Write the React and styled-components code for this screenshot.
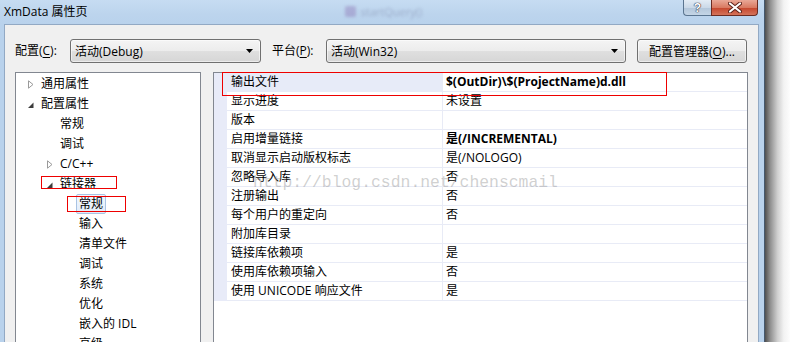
import React from "react";
import styled, { createGlobalStyle } from "styled-components";

const UI_FONT = `"Open Sans", "Noto Sans CJK SC", sans-serif`;

const GlobalStyle = createGlobalStyle`
  html, body { margin: 0; padding: 0; background: #ffffff; }
  body { font-family: ${UI_FONT}; font-size: 12px; color: #000; }
`;

const Page = styled.div`
  display: flex;
  width: 790px;
  height: 342px;
  overflow: hidden;
  background: #fff;
`;

const Window = styled.div`
  width: 765px;
  flex-shrink: 0;
  display: flex;
  flex-direction: column;
  box-sizing: border-box;
  background: #b9d2ec;
  border-right: 1px solid #44586e;
`;

const TitleBar = styled.div`
  height: 24px;
  flex-shrink: 0;
  display: flex;
  align-items: flex-start;
  padding-left: 4px;
  background: linear-gradient(180deg, #c6dcf2 0%, #bcd4ed 60%, #b9d2ec 100%);
`;

const Title = styled.span`
  line-height: 24px;
  font-size: 12px;
  color: #000;
`;

const GlassIcon = styled.span`
  margin-left: 258px;
  margin-top: 6px;
  width: 11px;
  height: 11px;
  border-radius: 2px;
  background: rgba(120, 80, 160, 0.3);
  filter: blur(1.5px);
`;

const GlassText = styled.span`
  margin-left: 4px;
  margin-top: 5px;
  line-height: 14px;
  font-size: 11px;
  color: rgba(70, 70, 110, 0.28);
  filter: blur(1.4px);
`;

const Caption = styled.div`
  margin-left: auto;
  margin-right: 6px;
  display: flex;
`;

const HelpButton = styled.div`
  width: 28px;
  height: 16px;
  box-sizing: border-box;
  border: 1px solid #5b7590;
  border-top: none;
  border-right: none;
  border-bottom-left-radius: 4px;
  background: linear-gradient(180deg, #e3ecf5 0%, #cbd9e8 50%, #b3c6da 51%, #c4d5e6 100%);
  display: flex;
  align-items: center;
  justify-content: center;
  font-family: "Liberation Sans", sans-serif;
  font-weight: bold;
  font-size: 12px;
  color: #fff;
  text-shadow: 0 0 1px #334, 0 0 1px #334, 0 0 1px #334;
`;

const CloseButton = styled.div`
  width: 47px;
  height: 16px;
  box-sizing: border-box;
  border: 1px solid #6b2c22;
  border-top: none;
  border-bottom-right-radius: 4px;
  background: linear-gradient(180deg, #e9a897 0%, #d97a62 50%, #c5452c 51%, #d4735a 100%);
  display: flex;
  align-items: center;
  justify-content: center;
`;

const Frame = styled.div`
  flex: 1;
  display: flex;
  padding: 0 5px 0 4px;
  min-height: 0;
`;

const Client = styled.div`
  flex: 1;
  display: flex;
  flex-direction: column;
  background: #f0f0f0;
  border: 1px solid #92a9c4;
  border-bottom: none;
  padding: 14px 10px 0 10px;
`;

const TopRow = styled.div`
  display: flex;
  align-items: center;
  height: 24px;
  margin-bottom: 9px;
  flex-shrink: 0;
`;

const Label = styled.span`
  width: ${(p) => p.$w}px;
  margin-left: ${(p) => p.$ml || 0}px;
  line-height: 24px;
  white-space: nowrap;
  u { text-decoration: underline; text-underline-offset: 2px; }
`;

const Combo = styled.div`
  width: ${(p) => p.$w}px;
  height: 24px;
  box-sizing: border-box;
  display: flex;
  align-items: center;
  padding: 0 7px 0 4px;
  border: 1px solid #707070;
  border-radius: 3px;
  background: linear-gradient(180deg, #f4f4f4 0%, #ececec 50%, #dfdfdf 51%, #d6d6d6 100%);
  box-shadow: inset 0 0 0 1px rgba(255, 255, 255, 0.55);
`;

const ComboText = styled.span`
  flex: 1;
  white-space: nowrap;
`;

const Button = styled.div`
  width: 110px;
  height: 24px;
  margin-left: 11px;
  box-sizing: border-box;
  display: flex;
  align-items: center;
  justify-content: center;
  border: 1px solid #707070;
  border-radius: 3px;
  background: linear-gradient(180deg, #f4f4f4 0%, #ececec 50%, #dfdfdf 51%, #d6d6d6 100%);
  box-shadow: inset 0 0 0 1px rgba(255, 255, 255, 0.55);
  white-space: nowrap;
  u { text-decoration: underline; text-underline-offset: 2px; }
`;

const Panels = styled.div`
  display: flex;
  gap: 12px;
  height: 290px;
  flex-shrink: 0;
`;

const Tree = styled.div`
  width: 186px;
  box-sizing: border-box;
  border: 1px solid #828790;
  background: #fff;
  padding-top: 1px;
`;

const TreeRow = styled.div`
  position: relative;
  height: 20px;
  display: flex;
  align-items: center;
  padding-left: ${(p) => 12 + 19 * p.$level}px;
`;

const Expander = styled.span`
  width: 13px;
  height: 20px;
  display: flex;
  align-items: center;
  flex-shrink: 0;
`;

const ItemText = styled.span`
  margin-left: -3px;
  padding: 0 2px;
  line-height: 18px;
  border: 1px solid ${(p) => (p.$selected ? "#a9c3e3" : "transparent")};
  border-radius: 2px;
  background: ${(p) => (p.$selected ? "linear-gradient(180deg, #f3f8fd, #e1ecf9)" : "transparent")};
  white-space: nowrap;
`;

const RedMark = styled.div`
  position: absolute;
  left: ${(p) => p.$x}px;
  top: ${(p) => p.$y}px;
  width: ${(p) => p.$w}px;
  height: ${(p) => p.$h}px;
  box-sizing: border-box;
  border: 1px solid #ee0000;
  pointer-events: none;
  z-index: 2;
`;

const Grid = styled.div`
  position: relative;
  width: 535px;
  box-sizing: border-box;
  border: 1px solid #828790;
  background: #fff;
`;

const GridRow = styled.div`
  position: relative;
  display: flex;
  height: 19px;
`;

const Gutter = styled.div`
  width: 13px;
  flex-shrink: 0;
  background: #e8ebf8;
`;

const NameCell = styled.div`
  width: 215px;
  flex-shrink: 0;
  box-sizing: border-box;
  padding-left: 4px;
  line-height: 18px;
  border-bottom: 1px solid #e8ebf6;
  background: ${(p) => (p.$selected ? "#e7ebf8" : "#fff")};
  white-space: nowrap;
`;

const ValueCell = styled.div`
  flex: 1;
  box-sizing: border-box;
  padding-left: 3px;
  line-height: 18px;
  border-left: 1px solid #e8ebf6;
  border-bottom: 1px solid #e8ebf6;
  font-weight: ${(p) => (p.$bold ? 700 : 400)};
  white-space: nowrap;
`;

const Watermark = styled.div`
  position: absolute;
  left: 39px;
  top: 100px;
  font-family: "Liberation Mono", monospace;
  font-size: 16.4px;
  line-height: 20px;
  color: rgba(150, 150, 150, 0.45);
  white-space: nowrap;
  pointer-events: none;
  z-index: 1;
`;

const Shadow = styled.div`
  flex: 1;
  background: linear-gradient(90deg, #505050 0%, #8d8d8d 20%, #cfcfcf 50%, #f2f2f2 75%, #fdfdfd 100%);
`;

const ComboArrow = () => (
  <svg width="7" height="4" viewBox="0 0 7 4">
    <path d="M0 0h7L3.5 4z" fill="#000" />
  </svg>
);

const Collapsed = () => (
  <svg width="6" height="9" viewBox="0 0 6 9">
    <path d="M0.5 0.8L5 4.5 0.5 8.2z" fill="#fff" stroke="#9a9a9a" strokeWidth="1" />
  </svg>
);

const Expanded = () => (
  <svg width="6" height="10" viewBox="0 0 6 10">
    <path d="M5.5 3.5v5.5H0z" fill="#3c3c3c" />
  </svg>
);

const CloseGlyph = () => (
  <svg width="14" height="11" viewBox="0 0 14 11">
    <path d="M2 1.5l10 8M12 1.5l-10 8" stroke="#5a2018" strokeWidth="4" strokeLinecap="round" />
    <path d="M2 1.5l10 8M12 1.5l-10 8" stroke="#fff" strokeWidth="2.2" strokeLinecap="round" />
  </svg>
);

const treeItems = [
  { label: "通用属性", level: 0, icon: "collapsed" },
  { label: "配置属性", level: 0, icon: "expanded" },
  { label: "常规", level: 1 },
  { label: "调试", level: 1 },
  { label: "C/C++", level: 1, icon: "collapsed" },
  { label: "链接器", level: 1, icon: "expanded", mark: { x: 25, y: 2, w: 76, h: 13 } },
  { label: "常规", level: 2, selected: true, mark: { x: 51, y: 2, w: 59, h: 16 } },
  { label: "输入", level: 2 },
  { label: "清单文件", level: 2 },
  { label: "调试", level: 2 },
  { label: "系统", level: 2 },
  { label: "优化", level: 2 },
  { label: "嵌入的 IDL", level: 2 },
  { label: "高级", level: 2 },
];

const props = [
  ["输出文件", "$(OutDir)\\$(ProjectName)d.dll", true],
  ["显示进度", "未设置"],
  ["版本", ""],
  ["启用增量链接", "是(/INCREMENTAL)", true],
  ["取消显示启动版权标志", "是(/NOLOGO)"],
  ["忽略导入库", "否"],
  ["注册输出", "否"],
  ["每个用户的重定向", "否"],
  ["附加库目录", ""],
  ["链接库依赖项", "是"],
  ["使用库依赖项输入", "否"],
  ["使用 UNICODE 响应文件", "是"],
];

export default function App() {
  return (
    <>
      <GlobalStyle />
      <Page>
        <Window>
          <TitleBar>
            <Title>XmData 属性页</Title>
            <GlassIcon />
            <GlassText>startQuery()</GlassText>
            <Caption>
              <HelpButton>?</HelpButton>
              <CloseButton>
                <CloseGlyph />
              </CloseButton>
            </Caption>
          </TitleBar>
          <Frame>
            <Client>
              <TopRow>
                <Label $w={55}>
                  配置(<u>C</u>):
                </Label>
                <Combo $w={191}>
                  <ComboText>活动(Debug)</ComboText>
                  <ComboArrow />
                </Combo>
                <Label $w={54} $ml={11}>
                  平台(<u>P</u>):
                </Label>
                <Combo $w={300}>
                  <ComboText>活动(Win32)</ComboText>
                  <ComboArrow />
                </Combo>
                <Button>
                  配置管理器(<u>O</u>)...
                </Button>
              </TopRow>
              <Panels>
                <Tree>
                  {treeItems.map((item, i) => (
                    <TreeRow key={i} $level={item.level}>
                      <Expander>
                        {item.icon === "collapsed" && <Collapsed />}
                        {item.icon === "expanded" && <Expanded />}
                      </Expander>
                      <ItemText $selected={item.selected}>{item.label}</ItemText>
                      {item.mark && (
                        <RedMark
                          $x={item.mark.x}
                          $y={item.mark.y}
                          $w={item.mark.w}
                          $h={item.mark.h}
                        />
                      )}
                    </TreeRow>
                  ))}
                </Tree>
                <Grid>
                  {props.map(([name, value, bold], i) => (
                    <GridRow key={i}>
                      <Gutter />
                      <NameCell $selected={i === 0}>{name}</NameCell>
                      <ValueCell $bold={bold}>{value}</ValueCell>
                      {i === 0 && <RedMark $x={8} $y={-1} $w={445} $h={24} />}
                    </GridRow>
                  ))}
                  <Watermark>http://blog.csdn.net/chenscmail</Watermark>
                </Grid>
              </Panels>
            </Client>
          </Frame>
        </Window>
        <Shadow />
      </Page>
    </>
  );
}
